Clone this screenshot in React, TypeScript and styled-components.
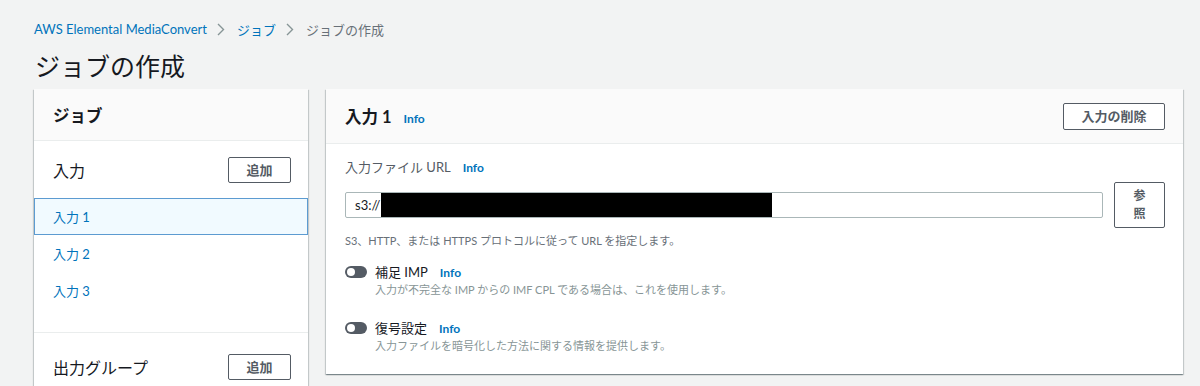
import React from "react";
import styled, { createGlobalStyle } from "styled-components";

const GlobalStyle = createGlobalStyle`
  html, body { margin: 0; padding: 0; }
  body {
    background: #f2f3f3;
    font-family: "Lato", "Noto Sans CJK JP", sans-serif;
    color: #16191f;
    width: 1200px;
    height: 386px;
    overflow: hidden;
  }
`;

const Page = styled.div`
  padding: 18px 0 0 34px;
  width: 1149px;
`;

const Breadcrumbs = styled.nav`
  display: flex;
  align-items: center;
  height: 22px;
  font-size: 13px;
`;

const Crumb = styled.span<{ $current?: boolean }>`
  color: ${(p) => (p.$current ? "#687078" : "#0073bb")};
`;

const Sep = styled.span`
  display: inline-flex;
  align-items: center;
  margin: 0 12px 0 10px;
  color: #879596;
`;

const Title = styled.h1`
  margin: 6px 0 0 1px;
  font-size: 25px;
  font-weight: 400;
  line-height: 40px;
  height: 43px;
  color: #16191f;
`;

const Layout = styled.div`
  display: grid;
  grid-template-columns: 274px 857px;
  column-gap: 18px;
  align-items: start;
`;

const Panel = styled.section`
  background: #fff;
  box-shadow: 0 1px 1px 0 rgba(0, 28, 36, 0.3), 1px 1px 1px 0 rgba(0, 28, 36, 0.15),
    -1px 1px 1px 0 rgba(0, 28, 36, 0.15);
`;

const PanelHeader = styled.header<{ $h: number }>`
  display: flex;
  align-items: center;
  justify-content: space-between;
  height: ${(p) => p.$h}px;
  box-sizing: border-box;
  padding: 0 18px 0 19px;
  background: #fafafa;
  border-bottom: 1px solid #eaeded;
`;

const HeaderTitle = styled.h2`
  margin: 0;
  font-size: 16.5px;
  font-weight: 700;
  display: flex;
  align-items: baseline;
`;

const InfoLink = styled.span`
  color: #0073bb;
  font-size: 12px;
  font-weight: 700;
  margin-left: 12px;
`;

const Button = styled.button<{ $w: number; $h: number }>`
  width: ${(p) => p.$w}px;
  height: ${(p) => p.$h}px;
  background: #fff;
  border: 1px solid #545b64;
  border-radius: 2px;
  color: #545b64;
  font-family: inherit;
  font-size: 13px;
  font-weight: 700;
  padding: 0;
  line-height: 20px;
`;

const SectionRow = styled.div<{ $h: number }>`
  display: flex;
  align-items: center;
  justify-content: space-between;
  height: ${(p) => p.$h}px;
  padding: 0 17px 0 19px;
`;

const SectionLabel = styled.span`
  font-size: 16px;
`;

const NavList = styled.ul`
  list-style: none;
  margin: 0;
  padding: 0 0 23px;
  border-bottom: 1px solid #eaeded;
`;

const NavItem = styled.li<{ $active?: boolean }>`
  height: 37px;
  box-sizing: border-box;
  display: flex;
  align-items: center;
  padding-left: 18px;
  font-size: 13px;
  color: #0073bb;
  background: ${(p) => (p.$active ? "#f1faff" : "transparent")};
  border: 1px solid ${(p) => (p.$active ? "#5c9bd1" : "transparent")};
`;

const Body = styled.div`
  padding: 13px 18px 20px 19px;
`;

const FieldLabel = styled.div`
  display: flex;
  align-items: baseline;
  font-size: 13px;
  color: #545b64;
  height: 16px;
`;

const InputRow = styled.div`
  display: flex;
  align-items: center;
  margin-top: 9px;
  gap: 11px;
`;

const TextBox = styled.div`
  flex: 1;
  height: 26px;
  box-sizing: border-box;
  border: 1px solid #aab7b8;
  border-radius: 2px;
  display: flex;
  align-items: center;
  padding-left: 9px;
  font-size: 13px;
  color: #16191f;
`;

const Redacted = styled.span`
  display: inline-block;
  width: 391px;
  height: 24px;
  background: #000;
  margin-left: 1px;
`;

const BrowseButton = styled(Button)`
  display: flex;
  flex-direction: column;
  align-items: center;
  justify-content: center;
  line-height: 18px;
  font-size: 12px;
`;

const Hint = styled.div`
  margin-top: 4px;
  font-size: 11px;
  color: #687078;
  height: 16px;
`;

const ToggleRow = styled.div<{ $mt: number }>`
  display: flex;
  align-items: flex-start;
  margin-top: ${(p) => p.$mt}px;
`;

const Toggle = styled.span`
  position: relative;
  width: 22px;
  height: 12px;
  border-radius: 6px;
  background: #545b64;
  margin-top: 3px;
  flex-shrink: 0;
  &::after {
    content: "";
    position: absolute;
    left: 2px;
    top: 2px;
    width: 8px;
    height: 8px;
    border-radius: 50%;
    background: #fff;
  }
`;

const ToggleText = styled.div`
  margin-left: 8px;
`;

const ToggleLabel = styled.div`
  display: flex;
  align-items: baseline;
  font-size: 13px;
  line-height: 18px;
  color: #16191f;
`;

const ToggleDesc = styled.div`
  font-size: 11px;
  line-height: 16px;
  color: #879596;
`;

const Chevron = () => (
  <svg width="8" height="13" viewBox="0 0 8 13">
    <path d="M1 1 L6.5 6.5 L1 12" fill="none" stroke="#879596" strokeWidth="1.4" />
  </svg>
);

export default function App() {
  return (
    <>
      <GlobalStyle />
      <Page>
        <Breadcrumbs>
          <Crumb>AWS Elemental MediaConvert</Crumb>
          <Sep>
            <Chevron />
          </Sep>
          <Crumb>ジョブ</Crumb>
          <Sep>
            <Chevron />
          </Sep>
          <Crumb $current>ジョブの作成</Crumb>
        </Breadcrumbs>
        <Title>ジョブの作成</Title>
        <Layout>
          <Panel>
            <PanelHeader $h={52}>
              <HeaderTitle>ジョブ</HeaderTitle>
            </PanelHeader>
            <SectionRow $h={57}>
              <SectionLabel>入力</SectionLabel>
              <Button $w={63} $h={26}>追加</Button>
            </SectionRow>
            <NavList>
              <NavItem $active>入力 1</NavItem>
              <NavItem>入力 2</NavItem>
              <NavItem>入力 3</NavItem>
            </NavList>
            <SectionRow $h={68}>
              <SectionLabel>出力グループ</SectionLabel>
              <Button $w={63} $h={26}>追加</Button>
            </SectionRow>
          </Panel>
          <Panel>
            <PanelHeader $h={55}>
              <HeaderTitle>
                入力 1<InfoLink>Info</InfoLink>
              </HeaderTitle>
              <Button $w={102} $h={27}>入力の削除</Button>
            </PanelHeader>
            <Body>
              <FieldLabel>
                入力ファイル URL<InfoLink>Info</InfoLink>
              </FieldLabel>
              <InputRow>
                <TextBox>
                  s3://<Redacted />
                </TextBox>
                <BrowseButton $w={51} $h={46}>
                  <span>参</span>
                  <span>照</span>
                </BrowseButton>
              </InputRow>
              <Hint>S3、HTTP、または HTTPS プロトコルに従って URL を指定します。</Hint>
              <ToggleRow $mt={15}>
                <Toggle />
                <ToggleText>
                  <ToggleLabel>
                    補足 IMP<InfoLink>Info</InfoLink>
                  </ToggleLabel>
                  <ToggleDesc>入力が不完全な IMP からの IMF CPL である場合は、これを使用します。</ToggleDesc>
                </ToggleText>
              </ToggleRow>
              <ToggleRow $mt={21}>
                <Toggle />
                <ToggleText>
                  <ToggleLabel>
                    復号設定<InfoLink>Info</InfoLink>
                  </ToggleLabel>
                  <ToggleDesc>入力ファイルを暗号化した方法に関する情報を提供します。</ToggleDesc>
                </ToggleText>
              </ToggleRow>
            </Body>
          </Panel>
        </Layout>
      </Page>
    </>
  );
}
